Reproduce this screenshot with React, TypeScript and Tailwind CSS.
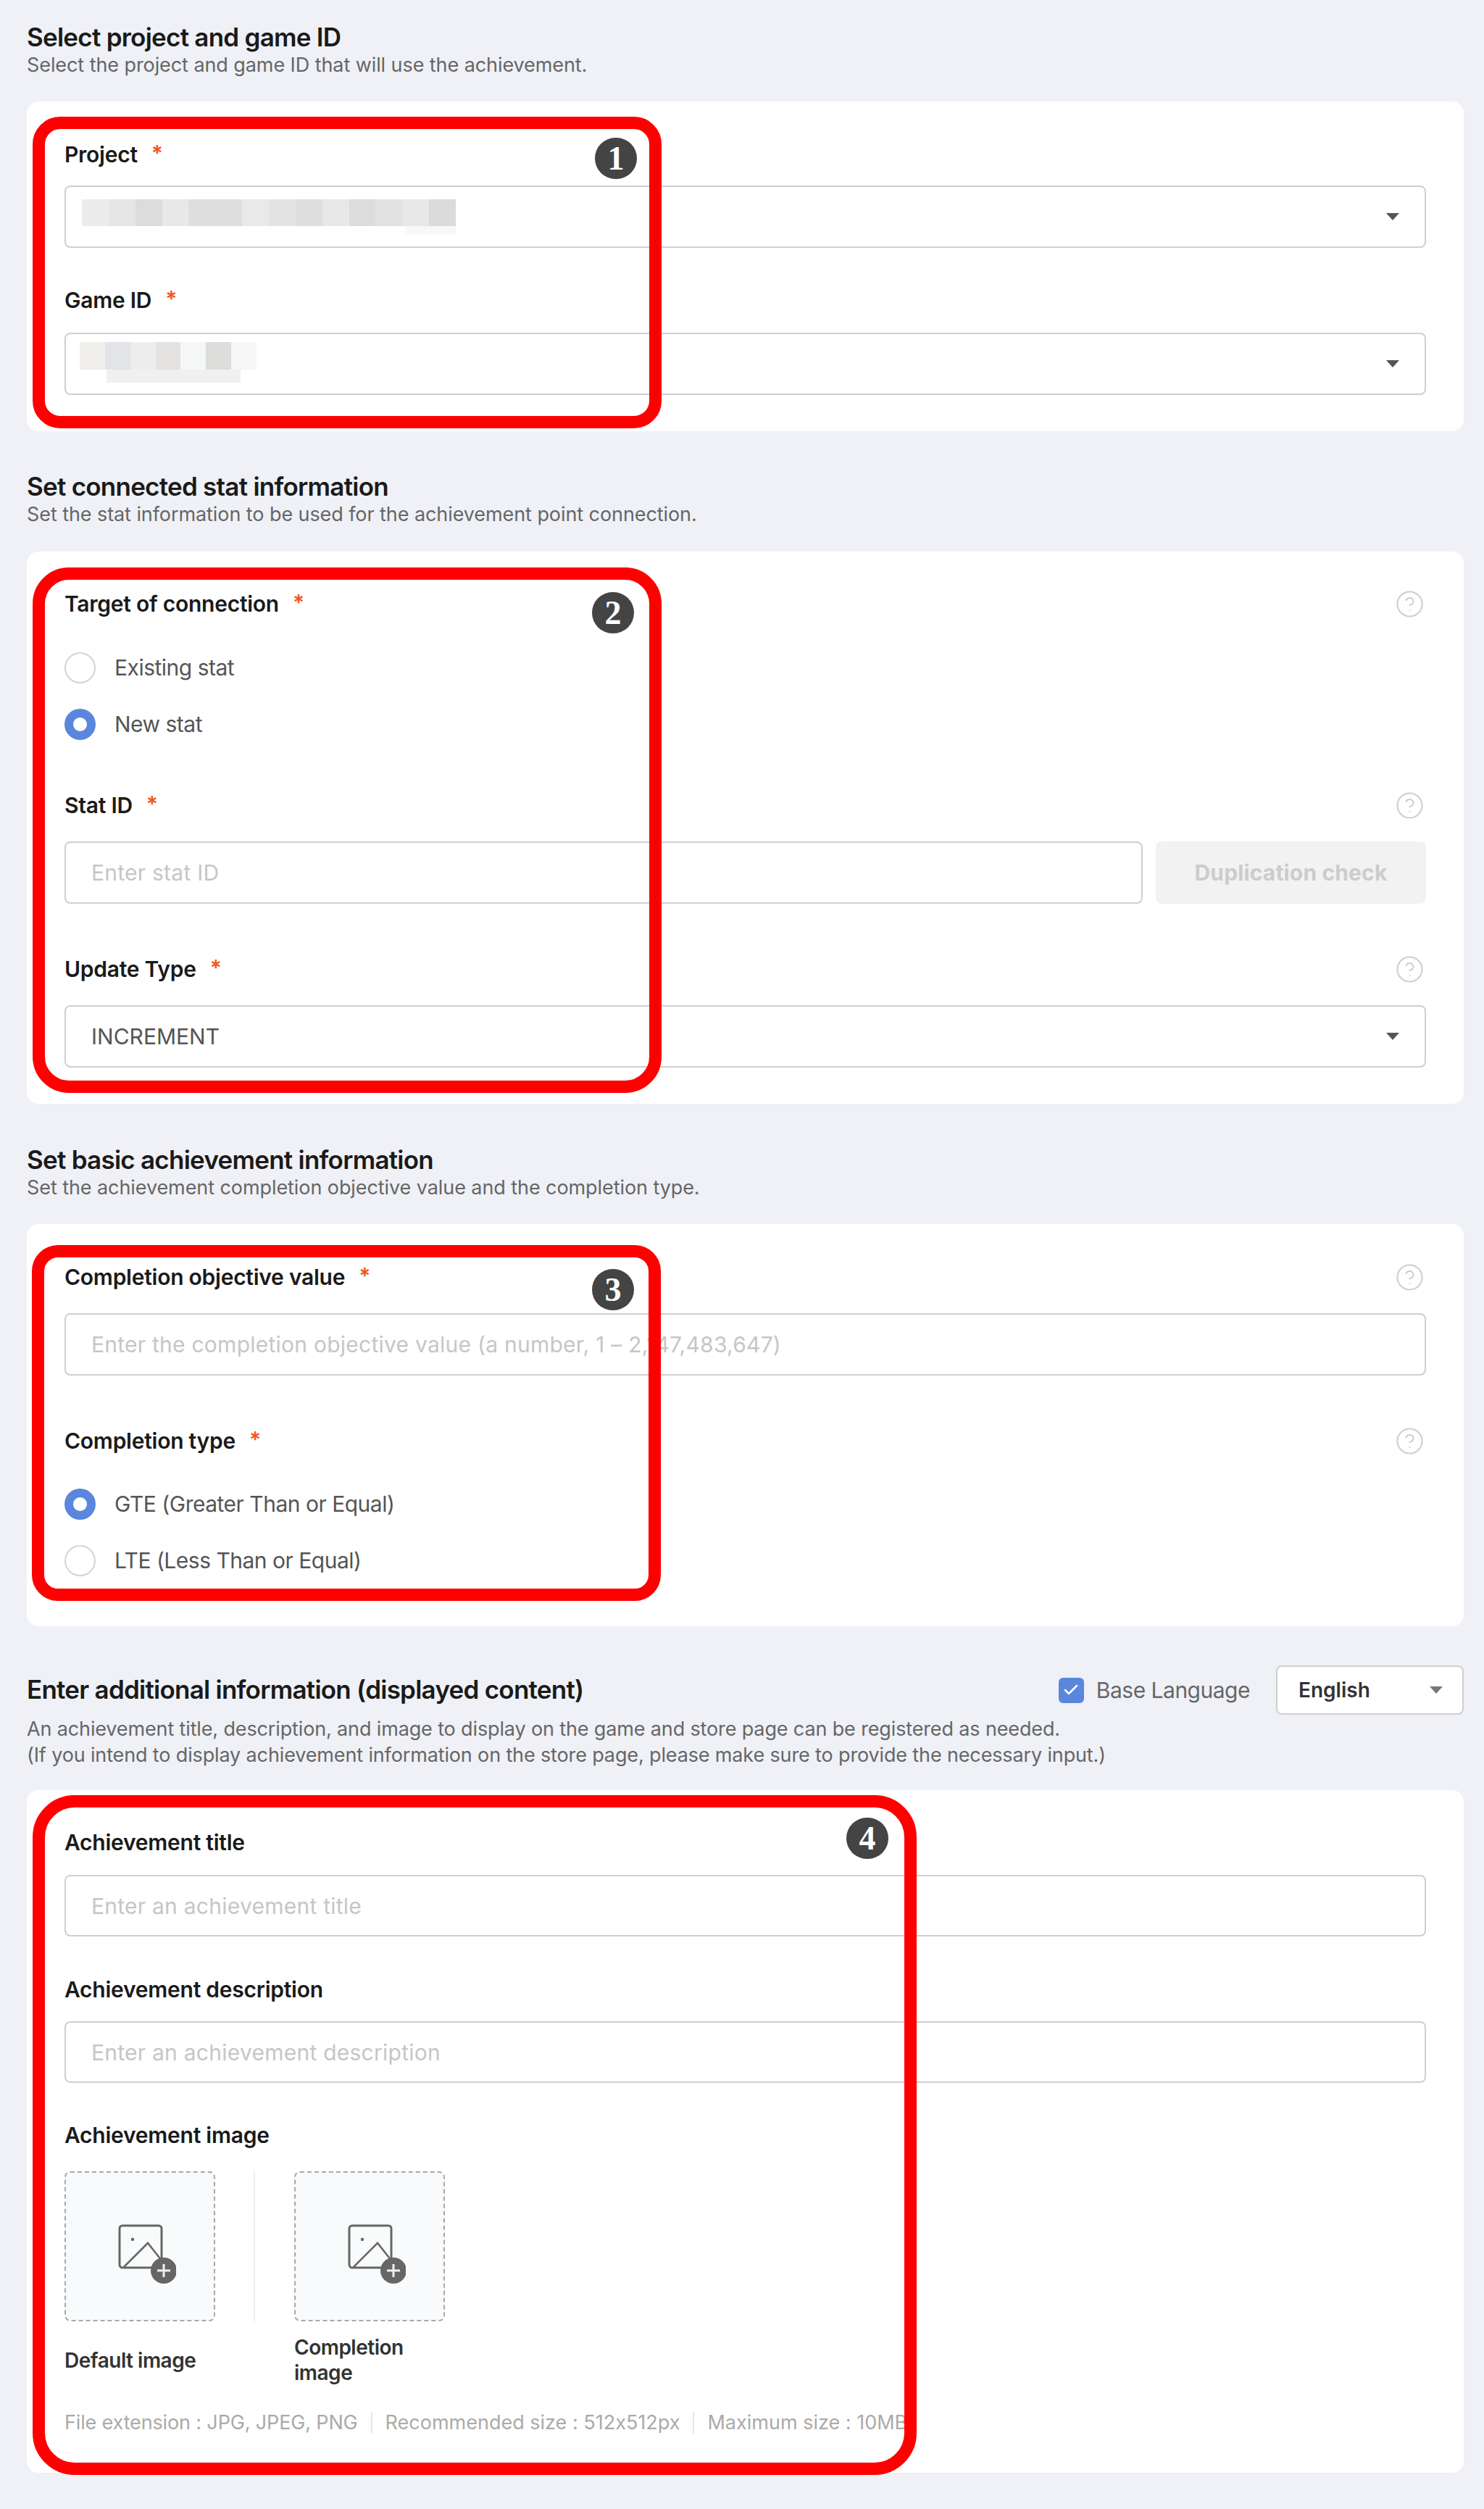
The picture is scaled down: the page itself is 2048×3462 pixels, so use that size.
import type React from "react"
import { Check, CircleHelp } from "lucide-react"

const Caret = ({ className = "border-t-[#555]" }: { className?: string }) => (
  <div className={`absolute top-1/2 -translate-y-1/2 w-0 h-0 border-x-[9px] border-x-transparent border-t-[10px] ${className}`} />
)

const Label = ({ text, required, help, className = "" }: { text: string; required?: boolean; help?: boolean; className?: string }) => (
  <div className={`flex items-center justify-between h-[40px] ${className}`}>
    <div className="flex items-center text-[30px] leading-[40px] font-semibold text-[#1a1a1a] tracking-[-0.25px]">
      {text}
      {required && <span className="ml-[19px] text-[30px] text-[#f2561d] -mt-[4px]">*</span>}
    </div>
    {help && <CircleHelp className="size-[41px] mr-[2px] text-[#cfcfcf]" strokeWidth={1.2} />}
  </div>
)

const TextInput = ({ placeholder, className = "" }: { placeholder: string; className?: string }) => (
  <input
    readOnly
    placeholder={placeholder}
    className={`block w-full rounded-[8px] border-2 border-[#cfcfcf] bg-white px-[35px] text-[30px] tracking-[0.25px] outline-none placeholder:text-[#c6c6c6] ${className}`}
  />
)

const SelectBox = ({ children, className = "" }: { children?: React.ReactNode; className?: string }) => (
  <div className={`relative flex items-center h-[86px] w-full rounded-[8px] border-2 border-[#cfcfcf] bg-white px-[35px] text-[30px] text-[#555] ${className}`}>
    {children}
    <div className="absolute right-[35px] top-0 h-full w-[18px]">
      <Caret />
    </div>
  </div>
)

const Radio = ({ text, checked, className = "" }: { text: string; checked?: boolean; className?: string }) => (
  <div className={`flex items-center h-[43px] gap-[26px] text-[30px] text-[#555] tracking-[-0.5px] ${className}`}>
    <span className={`size-[43px] rounded-full ${checked ? "border-[12px] border-[#5a87dd]" : "border-2 border-[#d4d4d4]"} bg-white`} />
    {text}
  </div>
)

// numbered callout box drawn over the form
const Marker = ({ digit, className, badge }: { digit: string; className: string; badge: string }) => (
  <div className={`absolute border-[17px] border-[#ff0000] pointer-events-none ${className}`}>
    <span className={`absolute flex items-center justify-center w-[58px] h-[57px] rounded-full bg-[#444] text-[46px] leading-none font-bold text-white font-['Liberation_Serif',serif] ${badge}`}>
      {digit}
    </span>
  </div>
)

const Head = ({ title, desc, className = "" }: { title: string; desc: string; className?: string }) => (
  <div className={className}>
    <h2 className="h-[40px] text-[35px] leading-[40px] font-semibold text-[#1a1a1a] tracking-[-0.75px]">{title}</h2>
    <p className="mt-[1px] h-[36px] text-[27px] leading-[36px] text-[#666] tracking-[-0.08px]">{desc}</p>
  </div>
)

const Card = ({ children, className = "" }: { children: React.ReactNode; className?: string }) => (
  <div className={`relative rounded-[16px] bg-white px-[52px] ${className}`}>{children}</div>
)

const Blur = ({ cells, className = "" }: { cells: string[]; className?: string }) => (
  <div className={`flex ${className}`}>
    {cells.map((c, i) => (
      <div key={i} className="h-full flex-1" style={{ backgroundColor: c }} />
    ))}
  </div>
)

const ImageAdd = () => (
  <svg width="80" height="82" viewBox="0 0 80 82" fill="none" className="text-[#666]">
    <rect x="2" y="2" width="58" height="58" rx="4" stroke="currentColor" strokeWidth="3" />
    <circle cx="20" cy="21" r="2.2" fill="currentColor" />
    <path d="M8 59 L41 26 L60 50" stroke="currentColor" strokeWidth="2.5" />
    <circle cx="63" cy="64" r="18" fill="currentColor" />
    <path d="M63 55v18M54 64h18" stroke="#f0f0f0" strokeWidth="3" />
  </svg>
)

const ImageBox = ({ label }: { label: string }) => (
  <div className="w-[208px]">
    <div className="flex items-center justify-center h-[207px] rounded-[8px] border-2 border-dashed border-[#a8a8a8] bg-[#f9fafb]">
      <div className="ml-[19px] mt-[20px]">
        <ImageAdd />
      </div>
    </div>
    <div className="flex items-center h-[70px] mt-[19px] text-[28px] leading-[35px] font-semibold text-[#333] tracking-[-0.5px]">{label}</div>
  </div>
)

export default function App() {
  return (
    <div className="min-h-[3462px] bg-[#eff1f6] pl-[37px] pr-[28px] pt-[31px] pb-[50px] font-[Inter,sans-serif]">
      <Head title="Select project and game ID" desc="Select the project and game ID that will use the achievement." />
      <Card className="mt-[32px] pt-[53px] pb-[50px]">
        <Label text="Project" required />
        <SelectBox className="mt-[23px]">
          <div className="absolute left-[22px] top-[17px] w-[516px]">
            <Blur className="h-[37px]" cells={["#ececec", "#e6e6e6", "#dcdcdc", "#e8e8e8", "#dfdfdf", "#dfdfdf", "#e9e9e9", "#e3e3e3", "#dfdfdf", "#e8e8e8", "#dcdcdc", "#e2e2e2", "#e8e8e8", "#dbdbdb"]} />
            <div className="ml-[446px] h-[11px] bg-[#f8f8f8]" />
          </div>
        </SelectBox>
        <Label text="Game ID" required className="mt-[52px]" />
        <SelectBox className="mt-[25px]">
          <div className="absolute left-[19px] top-[11px] w-[244px]">
            <Blur className="h-[38px]" cells={["#f0efec", "#e3e4e8", "#ededed", "#e4e3e2", "#f5f6f6", "#dddddb", "#f6f6f6"]} />
            <div className="ml-[37px] w-[185px] h-[18px] bg-[#f0f0f0]" />
          </div>
        </SelectBox>
        <Marker digit="1" className="left-[8px] top-[21px] w-[868px] h-[430px] rounded-[38px]" badge="right-[17px] top-[12px]" />
      </Card>

      <Head className="mt-[56px]" title="Set connected stat information" desc="Set the stat information to be used for the achievement point connection." />
      <Card className="mt-[33px] pt-[52px] pb-[50px]">
        <Label text="Target of connection" required help />
        <Radio text="Existing stat" className="mt-[47px]" />
        <Radio text="New stat" checked className="mt-[35px]" />
        <Label text="Stat ID" required help className="mt-[70px]" />
        <div className="flex gap-[18px] mt-[30px]">
          <TextInput placeholder="Enter stat ID" className="flex-1 h-[86px]" />
          <button className="w-[373px] h-[86px] rounded-[8px] bg-[#f2f2f2] text-[30px] font-bold text-[#cccccc] tracking-[0.15px]">Duplication check</button>
        </div>
        <Label text="Update Type" required help className="mt-[70px]" />
        <SelectBox className="mt-[30px]">INCREMENT</SelectBox>
        <Marker digit="2" className="left-[8px] top-[22px] w-[868px] h-[725px] rounded-[50px]" badge="right-[21px] top-[17px]" />
      </Card>

      <Head className="mt-[57px]" title="Set basic achievement information" desc="Set the achievement completion objective value and the completion type." />
      <Card className="mt-[32px] pt-[53px] pb-[69px]">
        <Label text="Completion objective value" required help />
        <TextInput placeholder="Enter the completion objective value (a number, 1 – 2,147,483,647)" className="mt-[30px] h-[86px]" />
        <Label text="Completion type" required help className="mt-[70px]" />
        <Radio text="GTE (Greater Than or Equal)" checked className="mt-[46px]" />
        <Radio text="LTE (Less Than or Equal)" className="mt-[35px]" />
        <Marker digit="3" className="left-[7px] top-[29px] w-[868px] h-[491px] rounded-[36px]" badge="right-[20px] top-[16px]" />
      </Card>

      <div className="flex items-start justify-between mt-[54px]">
        <h2 className="mt-[13px] h-[40px] text-[35px] leading-[40px] font-semibold text-[#1a1a1a] tracking-[-0.75px]">Enter additional information (displayed content)</h2>
        <div className="flex items-center">
          <span className="flex items-center justify-center size-[35px] rounded-[6px] bg-[#5a87dd]">
            <Check className="size-[24px] text-white" strokeWidth={2.5} />
          </span>
          <span className="ml-[17px] text-[30px] text-[#666] tracking-[-0.5px]">Base Language</span>
          <div className="relative flex items-center ml-[36px] w-[259px] h-[68px] rounded-[8px] border-2 border-[#cfcfcf] bg-white pl-[29px] text-[28px] font-semibold text-[#333]">
            English
            <div className="absolute right-[27px] top-0 h-full w-[18px]">
              <Caret className="border-t-[#777]" />
            </div>
          </div>
        </div>
      </div>
      <p className="mt-[2px] text-[27px] leading-[36px] text-[#666] tracking-[-0.14px]">
        An achievement title, description, and image to display on the game and store page can be registered as needed.
        <br />
        (If you intend to display achievement information on the store page, please make sure to provide the necessary input.)
      </p>
      <Card className="mt-[30px] pt-[50px] pb-[51px]">
        <Label text="Achievement title" className="translate-y-[2px]" />
        <TextInput placeholder="Enter an achievement title" className="mt-[27px] h-[85px]" />
        <Label text="Achievement description" className="mt-[51px] translate-y-[2px]" />
        <TextInput placeholder="Enter an achievement description" className="mt-[26px] h-[85px]" />
        <Label text="Achievement image" className="mt-[53px] -translate-y-[1px]" />
        <div className="flex mt-[29px]">
          <ImageBox label="Default image" />
          <div className="ml-[53px] mr-[54px] w-[2px] h-[207px] bg-[#efefef]" />
          <ImageBox label="Completion image" />
        </div>
        <div className="flex items-center mt-[33px] h-[36px] text-[27px] text-[#aaaaaa] whitespace-nowrap [font-feature-settings:'calt'_0]">
          <span className="tracking-[-0.15px]">File extension : JPG, JPEG, PNG</span>
          <span className="mx-[18px] w-[2px] h-[30px] bg-[#e6e6e6]" />
          <span>Recommended size : 512x512px</span>
          <span className="mx-[18px] w-[2px] h-[30px] bg-[#e6e6e6]" />
          <span>Maximum size : 10MB</span>
        </div>
        <Marker digit="4" className="left-[8px] top-[7px] w-[1220px] h-[938px] rounded-[58px]" badge="right-[22px] top-[14px]" />
      </Card>
    </div>
  )
}
